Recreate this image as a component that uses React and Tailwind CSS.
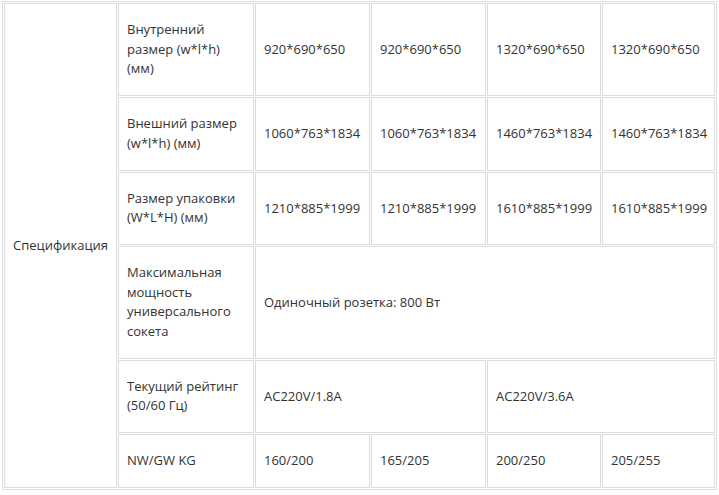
import React from "react";

const td = "border border-[#dcdcdc] px-[8px] py-[16.25px] align-middle";

const rows = [
  { label: "Внутренний размер (w*l*h) (мм)", cells: ["920*690*650", "920*690*650", "1320*690*650", "1320*690*650"] },
  { label: "Внешний размер (w*l*h) (мм)", cells: ["1060*763*1834", "1060*763*1834", "1460*763*1834", "1460*763*1834"] },
  { label: "Размер упаковки (W*L*H) (мм)", cells: ["1210*885*1999", "1210*885*1999", "1610*885*1999", "1610*885*1999"] },
];

export default function App() {
  return (
    <div className="min-h-screen bg-white pt-[1px] pl-[2px] text-[13px] leading-[19.5px] text-[#333]" style={{ fontFamily: '"Open Sans", "Noto Sans", sans-serif' }}>
      <table className="table-fixed w-[715px] border border-[#dcdcdc] border-separate border-spacing-[1px]">
        <colgroup>
          <col className="w-[113px]" />
          <col className="w-[136px]" />
          <col className="w-[115px]" />
          <col className="w-[115px]" />
          <col className="w-[114px]" />
          <col className="w-[113px]" />
        </colgroup>
        <tbody>
          {rows.map((r, i) => (
            <tr key={i}>
              {i === 0 && (
                <td rowSpan={6} className={td}>
                  Спецификация
                </td>
              )}
              <td className={td}>{r.label}</td>
              {r.cells.map((c, j) => (
                <td key={j} className={td}>{c}</td>
              ))}
            </tr>
          ))}
          <tr>
            <td className={td}>Максимальная мощность универсального сокета</td>
            <td colSpan={4} className={td}>Одиночный розетка: 800 Вт</td>
          </tr>
          <tr>
            <td className={td}>Текущий рейтинг (50/60 Гц)</td>
            <td colSpan={2} className={td}>AC220V/1.8A</td>
            <td colSpan={2} className={td}>AC220V/3.6A</td>
          </tr>
          <tr>
            <td className={td}>NW/GW KG</td>
            <td className={td}>160/200</td>
            <td className={td}>165/205</td>
            <td className={td}>200/250</td>
            <td className={td}>205/255</td>
          </tr>
        </tbody>
      </table>
    </div>
  );
}
